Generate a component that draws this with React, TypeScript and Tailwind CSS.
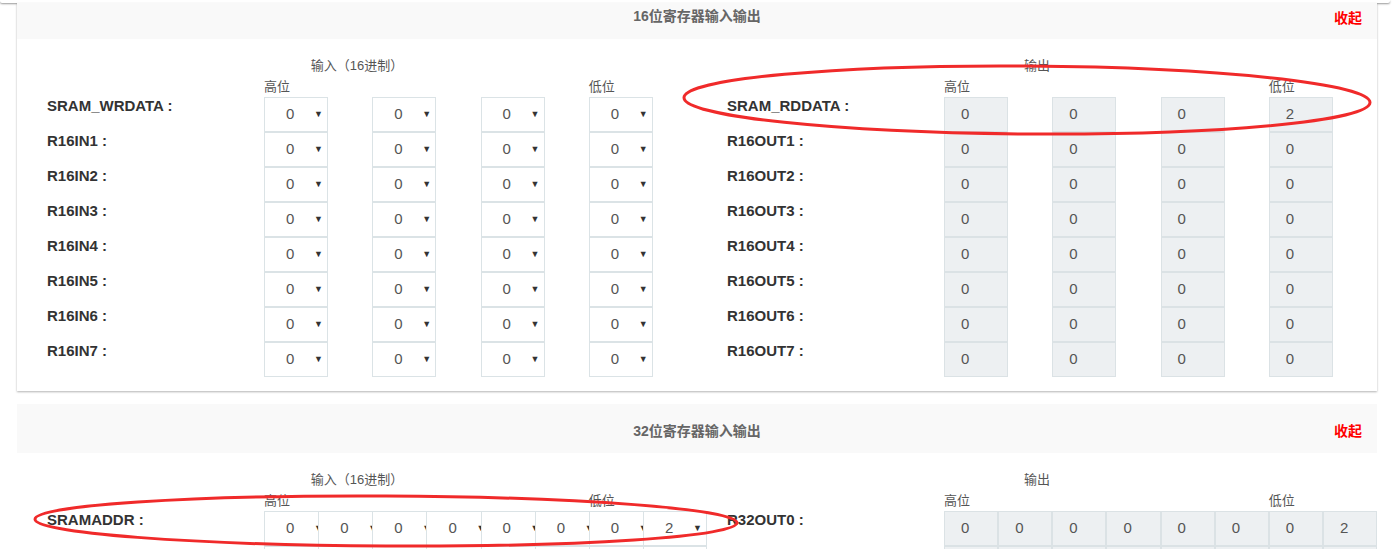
import React from 'react';

const font = "font-['Liberation_Sans','Noto_Sans_CJK_SC',sans-serif]";

type Row = { label: string; values: string[] };

const r16in: Row[] = [
  { label: 'SRAM_WRDATA :', values: ['0', '0', '0', '0'] },
  ...[1, 2, 3, 4, 5, 6, 7].map((n) => ({ label: `R16IN${n} :`, values: ['0', '0', '0', '0'] })),
];

const r16out: Row[] = [
  { label: 'SRAM_RDDATA :', values: ['0', '0', '0', '2'] },
  ...[1, 2, 3, 4, 5, 6, 7].map((n) => ({ label: `R16OUT${n} :`, values: ['0', '0', '0', '0'] })),
];

// second 32-bit row only peeks in at the bottom edge, so its boxes are drawn empty
const r32in: Row[] = [
  { label: 'SRAMADDR :', values: ['0', '0', '0', '0', '0', '0', '0', '2'] },
  { label: '', values: ['', '', '', '', '', '', '', ''] },
];

const r32out: Row[] = [
  { label: 'R32OUT0 :', values: ['0', '0', '0', '0', '0', '0', '0', '2'] },
  { label: '', values: ['', '', '', '', '', '', '', ''] },
];

function Select({ v }: { v: string }) {
  return (
    <div className="relative flex h-[35px] w-[64px] shrink-0 items-center justify-between border border-[#dbe3e6] bg-white pl-[21px] pr-[4px]">
      <span className="text-[15px] text-[#555]">{v}</span>
      {v && <span className="text-[9px] text-[#333]">▼</span>}
    </div>
  );
}

function Output({ v, wide }: { v: string; wide?: boolean }) {
  return (
    <div
      className={`flex h-[35px] items-center border border-[#dbe2e5] bg-[#edf0f2] pl-[16px] text-[15px] text-[#555] ${
        wide ? 'w-full' : 'w-[64px]'
      }`}
    >
      {v}
    </div>
  );
}

function Half({
  title,
  rows,
  cols,
  lowCol,
  kind,
}: {
  title: string;
  rows: Row[];
  cols: 4 | 8;
  lowCol: number;
  kind: 'in' | 'out';
}) {
  const grid = cols === 4 ? 'grid-cols-4' : 'grid-cols-8';
  return (
    <div className="pt-[16px]">
      <div className="flex h-[21px] items-center justify-center text-[13px] text-[#555]">{title}</div>
      <div className="flex">
        <div className="w-[247px] shrink-0" />
        <div className={`grid h-[21px] flex-1 ${grid} items-center text-[13px] text-[#555]`}>
          <span>高位</span>
          {Array.from({ length: cols - 2 }).map((_, i) =>
            i + 2 === lowCol ? <span key={i}>低位</span> : <span key={i} />
          )}
          {lowCol === cols ? <span>低位</span> : <span />}
        </div>
      </div>
      {rows.map((r, ri) => (
        <div key={ri} className="flex h-[35px]">
          <div className="w-[247px] shrink-0 pl-[30px] text-[15px] font-bold leading-[18px] text-[#333]">{r.label}</div>
          <div className={`grid flex-1 ${grid}`}>
            {r.values.map((v, i) => (
              <div key={i}>
                {kind === 'in' ? <Select v={v} /> : <Output v={v} wide={cols === 8} />}
              </div>
            ))}
          </div>
        </div>
      ))}
    </div>
  );
}

function Header({ title, short }: { title: string; short?: boolean }) {
  return (
    <div
      className={`relative flex items-center justify-center bg-[#f9f9f9] text-[14px] font-bold text-[#666] ${
        short ? 'h-[36px] pb-[10px]' : 'h-[49px] pt-[5px]'
      }`}
    >
      {title}
      <span className={`absolute right-[15px] text-[14px] font-bold text-[#ff0000] ${short ? 'top-[5px]' : 'top-[17px]'}`}>
        收起
      </span>
    </div>
  );
}

export default function App() {
  return (
    <div className={`relative h-[549px] w-[1396px] overflow-hidden bg-white ${font}`}>
      <div className="h-[3px] w-[1390px] rounded-b-[2px] bg-white shadow-[0_1px_2px_rgba(0,0,0,0.4)]" />

      <div className="ml-[17px] w-[1360px] bg-white shadow-[0_1px_2px_rgba(0,0,0,0.3)]">
        <Header title="16位寄存器输入输出" short />
        <div className="grid grid-cols-2 pb-[14px]">
          <Half title="输入（16进制）" rows={r16in} cols={4} lowCol={4} kind="in" />
          <Half title="输出" rows={r16out} cols={4} lowCol={4} kind="out" />
        </div>
      </div>

      <div className="ml-[17px] mt-[13px] w-[1360px] bg-white">
        <Header title="32位寄存器输入输出" />
        <div className="grid grid-cols-2 pb-[14px]">
          <Half title="输入（16进制）" rows={r32in} cols={8} lowCol={7} kind="in" />
          <Half title="输出" rows={r32out} cols={8} lowCol={7} kind="out" />
        </div>
      </div>

      <svg className="pointer-events-none absolute left-0 top-0" width="1396" height="549">
        <ellipse cx="1027" cy="100" rx="343" ry="34" fill="none" stroke="#f02a2a" strokeWidth="3" transform="rotate(0.4 1027 100)" />
        <ellipse cx="386" cy="521" rx="351" ry="25" fill="none" stroke="#f02a2a" strokeWidth="3" transform="rotate(0.3 386 521)" />
      </svg>
    </div>
  );
}
